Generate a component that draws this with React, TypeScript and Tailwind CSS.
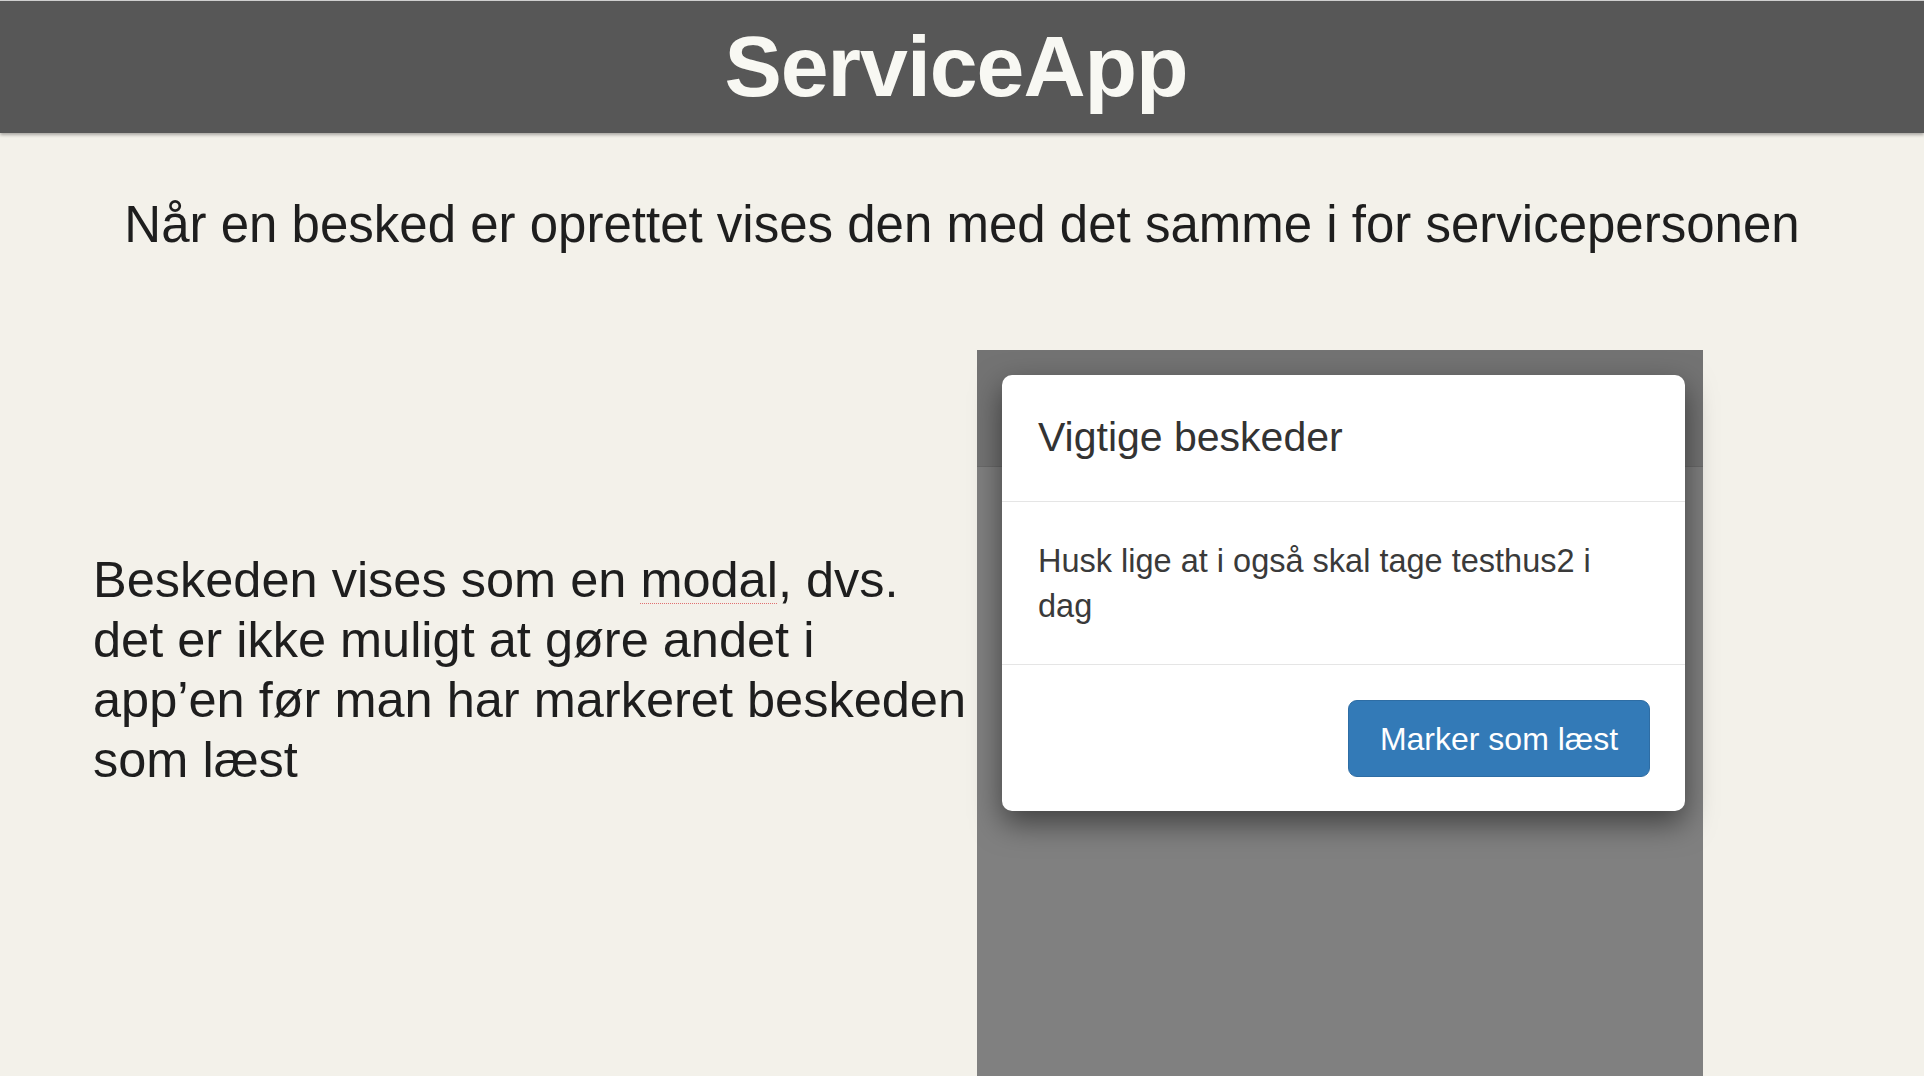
import React from "react";

export default function App() {
  const sans = { fontFamily: '"Liberation Sans", Arial, sans-serif' };
  return (
    <div
      className="w-[1924px] h-[1076px] overflow-hidden bg-[#f3f1ea] flex flex-col"
      style={sans}
    >
      {/* Header */}
      <header className="relative z-10 h-[133px] shrink-0 bg-[#575757] border-t border-[#cfcfcf] shadow-[0_2px_3px_rgba(0,0,0,0.3)] flex justify-center pt-[22px]">
        <h1 className="text-[86px] leading-none font-bold tracking-[-1px] text-[#f8f8f3] pr-[12px]">
          ServiceApp
        </h1>
      </header>

      {/* Subtitle */}
      <p className="mt-[62px] text-center text-[51px] leading-[60px] text-[#1e1e1e]">
        Når en besked er oprettet vises den med det samme i for servicepersonen
      </p>

      {/* Main */}
      <div className="mt-[95px] flex flex-1">
        <div className="w-[977px] shrink-0 pl-[93px] pt-[200px]">
          <p className="text-[50.5px] leading-[60px] text-[#1e1e1e]">
            <span className="block">
              Beskeden vises som en{" "}
              <span className="underline decoration-dotted decoration-[#e07070] decoration-1 underline-offset-[6px]">
                modal
              </span>
              , dvs.
            </span>
            <span className="block">det er ikke muligt at gøre andet i</span>
            <span className="block">app’en før man har markeret beskeden</span>
            <span className="block">som læst</span>
          </p>
        </div>

        {/* Phone screenshot */}
        <div className="relative w-[726px] h-[726px] shrink-0 bg-[#808080]">
          <div className="h-[117px] bg-[#737373] border-b border-[#6a6a6a]" />
          <div className="absolute left-[25px] top-[25px] w-[683px] bg-white rounded-[10px] shadow-[0_12px_30px_rgba(0,0,0,0.5)]">
            <div className="px-[36px] pt-[33px] pb-[35px] border-b border-[#e5e5e5]">
              <h2 className="text-[41px] leading-[58px] text-[#333333]">
                Vigtige beskeder
              </h2>
            </div>
            <div className="px-[36px] pt-[37px] pb-[35px] border-b border-[#e5e5e5]">
              <p className="text-[32.5px] leading-[45px] text-[#3a3a3a]">
                Husk lige at i også skal tage testhus2 i
                <br />
                dag
              </p>
            </div>
            <div className="px-[35px] pt-[35px] pb-[34px] flex justify-end">
              <button className="h-[77px] w-[302px] rounded-[9px] bg-[#337ab7] border border-[#2e6da4] text-white text-[32px] leading-none">
                Marker som læst
              </button>
            </div>
          </div>
        </div>
      </div>
    </div>
  );
}
